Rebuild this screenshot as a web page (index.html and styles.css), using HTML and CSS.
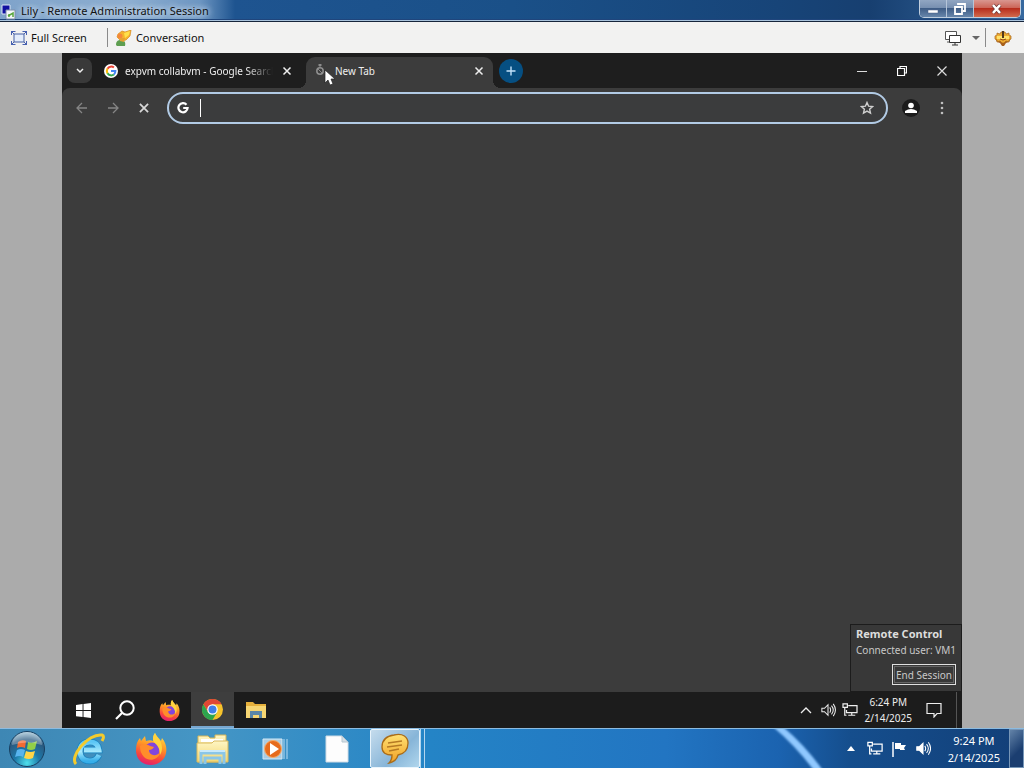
FILE: index.html
```html
<!DOCTYPE html>
<html lang="en">
<head>
<meta charset="utf-8">
<title>Lily - Remote Administration Session</title>
<link rel="stylesheet" href="styles.css">
</head>
<body>
<svg class="defs" aria-hidden="true">
  <defs>
    <linearGradient id="flame" x1="0.7" y1="0" x2="0.4" y2="1"><stop offset="0" stop-color="#ffe14a"/><stop offset=".4" stop-color="#ff9a26"/><stop offset=".75" stop-color="#f9473c"/><stop offset="1" stop-color="#e3206f"/></linearGradient>
    <radialGradient id="orb" cx=".5" cy=".9" r=".9"><stop offset="0" stop-color="#4fe0ec"/><stop offset=".4" stop-color="#1c78a8"/><stop offset=".75" stop-color="#2b5a80"/><stop offset="1" stop-color="#a8cbdc"/></radialGradient>
    <linearGradient id="ieblue" x1="0" y1="0" x2="0" y2="1"><stop offset="0" stop-color="#5bc6f5"/><stop offset=".5" stop-color="#a5e8fc"/><stop offset="1" stop-color="#35aeea"/></linearGradient>
    <linearGradient id="bubble" x1="0" y1="0" x2="0" y2="1"><stop offset="0" stop-color="#ffe173"/><stop offset="1" stop-color="#f0a024"/></linearGradient>
    <linearGradient id="folder" x1="0" y1="0" x2="0" y2="1"><stop offset="0" stop-color="#fff6c4"/><stop offset="1" stop-color="#f1d572"/></linearGradient>
    <symbol id="firefox" viewBox="0 0 32 32">
      <path fill="url(#flame)" d="M20 0c1 3 4 5 6 8l1-3c4 5 5 10 4 15-1 7-8 12-15 12C7 32 1 26 1 17c0-5 1-9 4-12l1 3 4-5 1 5c3-1 5-1 7 0 0-3 0-6 2-8z"/>
      <circle cx="17" cy="17" r="7.500" fill="#8245dd"/>
      <path fill="#ff8d2b" d="M5 13c3-2 7-2 10 0l4 1c-1 2-3 3-5 3 0 5 6 7 11 3-2 7-11 9-16 4-3-3-4-7-4-11z"/>
      <path fill="#ffd33f" d="M20 0c1 4 7 7 7 15 0 3-1 5-2 7 0-7-3-10-6-13-2-3-1-6 1-9z"/>
    </symbol>
    <symbol id="cross" viewBox="0 0 12 12"><path d="M2.500 2.500l7 7M9.500 2.500l-7 7" fill="none" stroke="currentColor" stroke-width="1.500"/></symbol>
    <symbol id="flag4" viewBox="0 0 16 16"><path fill="currentColor" d="M0 2l7-1v6.500H0zM8 1l8-1v7.500H8zM0 8.500h7V15l-7-1zM8 8.500h8V16l-8-1z"/></symbol>
    <symbol id="speaker" viewBox="0 0 18 16"><path d="M2 6h3l4-4v12l-4-4H2z" fill="var(--fill)" stroke="currentColor" stroke-width="1.200"/><path d="M11 5q2 3 0 6M13 3q4 5 0 10M15 1q5 7 0 14" fill="none" stroke="currentColor" stroke-width="1.200"/></symbol>
    <symbol id="network" viewBox="0 0 18 16"><path d="M7 3h10v8H5V8M11 11v3M7 14h8M1 1h5v4H1zM3 5v9h2" fill="none" stroke="currentColor" stroke-width="1.400"/></symbol>
  </defs>
</svg>

<header class="titlebar">
  <svg class="app-icon" width="16" height="18" viewBox="0 0 16 18"><path fill="#1010a0" stroke="#dce6f4" d="M2 3h8v9H2z"/><path fill="#f4f6fa" stroke="#7f8fa8" d="M6 8h9v9H6z"/><path d="M8 14l5-3v4M9 15v-3" stroke="#58a63c" stroke-width="1.500" fill="none"/></svg>
  <h1 class="title">Lily - Remote Administration Session</h1>
  <div class="aero-controls">
    <button class="aero-btn" aria-label="Minimize"><svg width="14" height="12" viewBox="0 0 14 12"><path fill="#fff" stroke="#4c6388" stroke-width=".500" d="M2 7h10v3H2z"/></svg></button>
    <button class="aero-btn" aria-label="Restore"><svg width="14" height="14" viewBox="0 0 14 14"><path d="M5 3V2h7v7h-2M2 5h7v7H2z" fill="none" stroke="#fff" stroke-width="1.800"/></svg></button>
    <button class="aero-btn aero-close" aria-label="Close"><svg width="14" height="12" viewBox="0 0 14 12"><path d="M3 2l7 8M10 2l-7 8" stroke="#713838" stroke-width="4"/><path d="M3 2l7 8M10 2l-7 8" stroke="#fff" stroke-width="2.500"/></svg></button>
  </div>
</header>

<nav class="toolbar" aria-label="Session">
  <button class="tool"><svg width="16" height="14" viewBox="0 0 16 14"><path d="M3 3h10v8H3z" fill="#e4edfb" stroke="#4660a4"/><path d="M.5 4V.5h4M11.500 .5h4V4M15.500 10v3.500h-4M4.500 13.500h-4V10M0 0l3 3M16 0l-3 3M16 14l-3-3M0 14l3-3" fill="none" stroke="#4660b0"/></svg>Full Screen</button>
  <span class="rule"></span>
  <button class="tool"><svg width="16" height="16" viewBox="0 0 16 16"><path fill="#f5b42c" stroke="#d78a20" stroke-width=".700" d="M6 1l3 1 6-2-1 6-4 4-5 1-4-4 1-3z"/><circle cx="4" cy="6" r="2.500" fill="#f4883c"/><path fill="#ffe04a" d="M8 3l6-2-1 4-4 3z"/><path fill="#5e9e50" d="M0 15c0-4 2-5 5-5 3 0 5 2 4 6H1z"/><path fill="#e6a032" d="M4 8h5l-1 4-4-1z"/></svg>Conversation</button>
  <span class="spacer"></span>
  <button class="tool" aria-label="Monitors"><svg width="18" height="16" viewBox="0 0 18 16"><path fill="#fff" stroke="#555" d="M1.500 1.500h11v8h-11zM3 12h4"/><path fill="#fff" stroke="#333" d="M5.500 5.500h11v7h-11zM8 15h6M11 13v2"/></svg></button>
  <button class="tool tool-arrow" aria-label="Monitor options"><svg width="8" height="4" viewBox="0 0 8 4"><path fill="#666" d="M0 0h8L4 4z"/></svg></button>
  <span class="rule"></span>
  <button class="tool tool-gear" aria-label="Settings"><svg width="18" height="16" viewBox="0 0 18 16"><path fill="#a8601c" d="M1 8l2 4 3 1 2 3h2l2-3 3-1 2-4z"/><path fill="#edac32" stroke="#a8661c" stroke-width=".700" d="M1 6l2-1V3l3 1 1-2h4l1 2 3-1v2l2 1v3l-2 1v2l-3-1-2 2H8l-2-2-3 1v-2L1 9z"/><path fill="#ffe26c" d="M3 6h12v3H3z"/><path d="M9 1v7" stroke="#52381e" stroke-width="2"/><path d="M6 9q3 2 6 0" stroke="#8d481c" fill="none"/></svg></button>
</nav>

<main class="session">
  <section class="remote">
    <div class="tabstrip">
      <button class="tab-search" aria-label="Search tabs"><svg width="10" height="8" viewBox="0 0 10 8"><path d="M2 2l3 3 3-3" fill="none" stroke="#eee" stroke-width="1.500"/></svg></button>
      <div class="tab">
        <svg width="14" height="14" viewBox="0 0 24 24"><circle cx="12" cy="12" r="12" fill="#fff"/><g fill="none" stroke-width="3.500"><path d="M6 8a7.500 7.500 0 0 1 11-2" stroke="#ea4335"/><path d="M6 16a7.500 7.500 0 0 1 0-8" stroke="#fbbc05"/><path d="M17 18a7.500 7.500 0 0 1-11-2" stroke="#34a853"/><path d="M12 12h7.500q0 4-2.500 6" stroke="#4285f4"/></g></svg>
        <a class="tab-label fade" href="#search">expvm collabvm - Google Search</a>
        <button class="tab-close" aria-label="Close tab"><svg width="12" height="12"><use href="#cross"/></svg></button>
      </div>
      <div class="tab tab-active">
        <svg width="14" height="14" viewBox="0 0 14 14"><circle cx="6" cy="7" r="3.200" fill="none" stroke="#909090" stroke-width="1.500"/><path d="M5 0h2v2H5zM4 5l4 4" fill="#999" stroke="#888"/></svg>
        <a class="tab-label" href="#new">New Tab</a>
        <button class="tab-close" aria-label="Close tab"><svg width="12" height="12"><use href="#cross"/></svg></button>
        <svg class="pointer" width="12" height="18" viewBox="0 0 12 18"><path fill="#fff" stroke="#222" stroke-width=".700" d="M1 1v13l3-3 2 5 3-1-2-5h4z"/></svg>
      </div>
      <button class="new-tab" aria-label="New tab"><svg width="12" height="12" viewBox="0 0 12 12"><path d="M6 1.500v9M1.500 6h9" stroke="#c2e2fa" stroke-width="1.400"/></svg></button>
      <span class="spacer"></span>
      <button class="win-btn" aria-label="Minimize"><svg width="10" height="10" viewBox="0 0 10 10"><path d="M0 5.500h10" stroke="#ddd"/></svg></button>
      <button class="win-btn" aria-label="Restore"><svg width="10" height="10" viewBox="0 0 10 10"><path d="M3 2.500v-2h6.500v6.500h-2M.5 2.500h7v7h-7z" fill="none" stroke="#fff" stroke-width="1.200"/></svg></button>
      <button class="win-btn" aria-label="Close"><svg width="10" height="10" viewBox="0 0 10 10"><path d="M.5 .5l9 9M9.500 .5l-9 9" stroke="#ddd" stroke-width="1.200"/></svg></button>
    </div>

    <div class="browser-bar">
      <button class="nav-btn dim" aria-label="Back"><svg width="12" height="12" viewBox="0 0 12 12"><path d="M11 6H1M6 1L1 6l5 5" fill="none" stroke="currentColor" stroke-width="1.300"/></svg></button>
      <button class="nav-btn dim" aria-label="Forward"><svg width="12" height="12" viewBox="0 0 12 12"><path d="M1 6h10M6 1l5 5-5 5" fill="none" stroke="currentColor" stroke-width="1.300"/></svg></button>
      <button class="nav-btn" aria-label="Stop"><svg width="14" height="14"><use href="#cross"/></svg></button>
      <div class="omnibox">
        <svg width="12" height="12" viewBox="0 0 12 12"><path d="M9.500 2.700A4.600 4.600 0 1 0 10.600 6H6.200" fill="none" stroke="#fff" stroke-width="2.200"/></svg>
        <span class="caret"></span>
        <input class="address" type="text" aria-label="Address">
        <button class="star" aria-label="Bookmark"><svg width="14" height="14" viewBox="0 0 14 14"><path d="M7 1.500l1.600 3.700 3.900.4-2.900 2.600.9 3.900L7 10.100l-3.500 2 .9-3.900-2.900-2.600 3.900-.4z" fill="none" stroke="#d0d0d0" stroke-width="1.400"/></svg></button>
      </div>
      <button class="profile" aria-label="Profile"><svg width="12" height="12" viewBox="0 0 12 12"><circle cx="6" cy="3.500" r="2.800" fill="#fff"/><path fill="#fff" d="M0 11V9q6-4 12 0v2z"/></svg></button>
      <button class="menu" aria-label="Menu"><svg width="4" height="14" viewBox="0 0 4 14"><g fill="#c0c0c0"><circle cx="2" cy="2" r="1.300"/><circle cx="2" cy="7" r="1.300"/><circle cx="2" cy="12" r="1.300"/></g></svg></button>
    </div>

    <div class="page">
      <aside class="control">
        <h2>Remote Control</h2>
        <p>Connected user: VM1</p>
        <button class="end">End Session</button>
      </aside>
    </div>

    <footer class="remote-taskbar">
      <button class="rt-app" aria-label="Start"><svg width="15" height="15"><use href="#flag4"/></svg></button>
      <button class="rt-app rt-search" aria-label="Search"><svg width="20" height="20" viewBox="0 0 20 20"><circle cx="12" cy="8" r="6.700" fill="none" stroke="#fff" stroke-width="2"/><path d="M7 13l-6 6" stroke="#fff" stroke-width="2.200"/></svg></button>
      <button class="rt-app" aria-label="Firefox"><svg width="21" height="21"><use href="#firefox"/></svg></button>
      <button class="rt-app rt-active" aria-label="Chrome"><svg width="21" height="21" viewBox="0 0 24 24"><circle cx="12" cy="12" r="12" fill="#f6c32c"/><path fill="#df4735" d="M1.600 6A12 12 0 0 1 22.400 6H12L7 15z"/><path fill="#2da44e" d="M1.600 6A12 12 0 0 0 12 24l5.200-9-5.200 1-5-1z"/><circle cx="12" cy="12" r="6" fill="#fff"/><circle cx="12" cy="12" r="4.600" fill="#3e7ee8"/></svg></button>
      <button class="rt-app" aria-label="File Explorer"><svg width="20" height="16" viewBox="0 0 20 16"><path fill="#e6b03c" d="M0 0h7l2 2h11v4H0z"/><path fill="#f7d673" d="M0 4h20v12H0z"/><path fill="#5a86a8" d="M4 9h12v7h-3v-3H7v3H4z"/></svg></button>
      <span class="spacer"></span>
      <button class="rt-tray" aria-label="Show hidden icons"><svg width="12" height="8" viewBox="0 0 12 8"><path d="M1 7l5-5 5 5" fill="none" stroke="#eee" stroke-width="1.300"/></svg></button>
      <button class="rt-tray" aria-label="Volume"><svg width="16" height="14"><use href="#speaker"/></svg></button>
      <button class="rt-tray" aria-label="Network"><svg width="16" height="14"><use href="#network"/></svg></button>
      <time class="rt-clock"><span>6:24 PM</span><span>2/14/2025</span></time>
      <button class="rt-note" aria-label="Notifications"><svg width="16" height="16" viewBox="0 0 16 16"><path d="M1 1.500h14v10h-4L8 15v-3.500H1z" fill="none" stroke="#eee" stroke-width="1.200"/></svg></button>
    </footer>
  </section>
</main>

<footer class="taskbar">
  <svg class="streak" width="70" height="40" viewBox="0 0 70 40"><defs><filter id="soft"><feGaussianBlur stdDeviation="1.300"/></filter></defs><path d="M2-3h10q24 20 42 46h-9Q26 17 2-3z" fill="#8fc8ff" filter="url(#soft)"/></svg>
  <button class="start" aria-label="Start"><svg width="38" height="38" viewBox="0 0 38 38"><circle cx="19" cy="19" r="17.500" fill="url(#orb)" stroke="#173f61"/><path fill="#f26a32" d="M10 12q4-3 8-1l-1 7q-4-2-8 0z"/><path fill="#91cf48" d="M20 12q4 2 9-1l-2 8q-4 2-8 0z"/><path fill="#58b4ee" d="M9 20q4-2 8 0l-2 7q-3-2-8 0z"/><path fill="#ffd547" d="M18 21q4 2 9 0l-2 7q-4 2-9 0z"/><path fill="#fff" opacity=".28" d="M4 15a15 13 0 0 1 30 0q-15-5-30 0z"/></svg></button>
  <button class="app" aria-label="Internet Explorer"><svg width="34" height="34" viewBox="0 0 34 34"><path d="M27 23q-3 6-9 6-9 0-10-9 0-10 10-10 8 0 9 8H12" fill="none" stroke="#1783c0" stroke-width="6.500"/><path d="M27 23q-3 6-9 6-9 0-10-9 0-10 10-10 8 0 9 8H12" fill="none" stroke="url(#ieblue)" stroke-width="5"/><path d="M4 32C-3 25 16 1 30 3q3 1 0 6" fill="none" stroke="#f4cb2c" stroke-width="3"/></svg></button>
  <button class="app" aria-label="Firefox"><svg width="32" height="32"><use href="#firefox"/></svg></button>
  <button class="app" aria-label="Explorer"><svg width="34" height="32" viewBox="0 0 34 32"><path fill="url(#folder)" stroke="#d6b456" d="M2 3h10l2 2h5V2h11v27H2z"/><path fill="#fff" d="M5 6h22v3H5z"/><path fill="url(#folder)" stroke="#d9b95f" d="M1 10h15l2-2h14v21H1z"/><path d="M5 31V20h23v11M9 31v-6h15v6" stroke="#8ac6e8" stroke-width="3" fill="none"/><path d="M4 18h25" stroke="#c9e9fa" stroke-width="2"/></svg></button>
  <button class="app" aria-label="Media Player"><svg width="26" height="26" viewBox="0 0 26 26"><path fill="#a9cce3" stroke="#d4e9f5" d="M1 3h19v20H1z"/><path d="M22 3v20M25 3v20" stroke="#b8dcf5"/><circle cx="11" cy="13" r="8.500" fill="#e66b1c" stroke="#f7ac68"/><path fill="#fff" d="M8 7l9 6-9 6z"/></svg></button>
  <button class="app" aria-label="Document"><svg width="24" height="28" viewBox="0 0 24 28"><path fill="#fdfdfd" stroke="#d1dce5" d="M1 1h16l6 6v20H1z"/><path fill="#d7e0e6" stroke="#b6c6d0" d="M17 1v6h6z"/></svg></button>
  <button class="app app-active" aria-label="Conversation"><svg width="32" height="32" viewBox="0 0 32 32"><path fill="url(#bubble)" stroke="#a96c19" stroke-width="1.300" d="M15 2c9-2 14 2 14 8 0 8-5 11-10 12-1 4-4 7-9 8 3-3 3-5 3-8-6 0-10-2-10-8C3 7 8 3 15 2z"/><path d="M9 10l14-2M8 14l15-2M10 18l10-2" stroke="#b67a24" stroke-width="1.300"/></svg></button>
  <span class="stack"></span>
  <span class="spacer"></span>
  <button class="tray" aria-label="Show hidden icons"><svg width="8" height="5" viewBox="0 0 8 5"><path fill="#fff" d="M0 5l4-5 4 5z"/></svg></button>
  <button class="tray" aria-label="Network"><svg width="16" height="15"><use href="#network"/></svg></button>
  <button class="tray" aria-label="Action Center"><svg width="16" height="16" viewBox="0 0 16 16"><path d="M2 1v15" stroke="#fff" stroke-width="1.500"/><path fill="#fff" d="M4 2h6v2h5l-2 3 1 2H9V8H4z"/></svg></button>
  <button class="tray tray-solid" aria-label="Volume"><svg width="16" height="15"><use href="#speaker"/></svg></button>
  <time class="clock"><span>9:24 PM</span><span>2/14/2025</span></time>
  <button class="show-desktop" aria-label="Show desktop"></button>
</footer>
</body>
</html>
```

FILE: styles.css
```css
* { box-sizing: border-box; }

body {
  margin: 0;
  height: 100vh;
  display: flex;
  flex-direction: column;
  overflow: hidden;
  font: 11px/16px "Noto Sans", sans-serif;
  color: #111;
}

.defs { position: absolute; width: 0; height: 0; }

button {
  margin: 0;
  padding: 0;
  border: 0;
  background: none;
  color: inherit;
  font: inherit;
  display: flex;
  align-items: center;
  justify-content: center;
  flex: none;
}

svg { flex: none; }
a { color: inherit; text-decoration: none; }
h1, h2, p { margin: 0; font: inherit; }
.spacer { flex: 1; }

/* Local window frame */
.titlebar {
  flex: none;
  height: 22px;
  display: flex;
  align-items: center;
  gap: 5px;
  background: linear-gradient(90deg, #7fa3ca 0, #8daed0 130px, #6d96c2 200px, #1e5490 235px, #1a5088 50%, #174478 76%, #173f70 85%, #37699f 100%);
  border-bottom: 1px solid #17263c;
  box-shadow: inset 0 -1px #a9c3dc, inset 0 -2px #1f457c;
}

.title { text-shadow: 0 0 6px #dce8f5, 0 0 6px #dce8f5; }

.aero-controls {
  display: flex;
  align-self: flex-start;
  height: 18px;
  margin-left: auto;
  margin-right: 3px;
  border: 1px solid #c0cede;
  border-top: 0;
  border-radius: 0 0 5px 5px;
  overflow: hidden;
}

.aero-btn {
  width: 27px;
  background: linear-gradient(#91a6c2 0, #7890b1 45%, #3f5d86 50%, #6786ab 100%);
  border-right: 1px solid #b5c5d9;
}

.aero-close {
  width: 46px;
  border-right: 0;
  background: linear-gradient(#d99790 0, #cc6659 45%, #b72d1d 50%, #d16a4c 100%);
}

.toolbar {
  flex: none;
  height: 31px;
  display: flex;
  align-items: center;
  padding: 0 10px 0 11px;
  background: #f2f2f1;
}

.tool { gap: 4px; }
.tool-arrow { margin-left: 10px; }
.tool-gear { margin-right: 2px; }
.rule { width: 1px; height: 19px; margin: 0 8px 0 20px; background: #8a8a8a; }
.tool-arrow + .rule { margin: 0 8px 0 5px; }

/* Remote screen */
.session { flex: 1; min-height: 0; display: flex; padding: 0 62px; background: #ababab; }
.remote { flex: 1; min-width: 0; display: flex; flex-direction: column; background: #1e1e1e; color: #eee; font-size: 10px; }

.tabstrip { flex: none; height: 35px; display: flex; align-items: center; padding: 0 0 0 5px; }

.tab-search { width: 25px; height: 25px; border-radius: 8px; background: #393939; }

.tab { width: 207px; height: 31px; display: flex; align-items: center; gap: 7px; padding: 0 5px 0 12px; }
.tab-label { flex: 1; min-width: 0; white-space: nowrap; overflow: hidden; }
.fade { -webkit-mask-image: linear-gradient(90deg, #000 82%, transparent); mask-image: linear-gradient(90deg, #000 82%, transparent); }
.tab-close { width: 14px; height: 14px; }

.tab-active {
  position: relative;
  align-self: flex-end;
  width: 187px;
  margin-left: 7px;
  padding: 0 7px 4px 8px;
  background: #3c3c3c;
  border-radius: 9px 9px 0 0;
}

.tab-active::before,
.tab-active::after {
  content: "";
  position: absolute;
  bottom: 0;
  width: 8px;
  height: 8px;
}
.tab-active::before { right: 100%; background: radial-gradient(circle at 0 0, transparent 8px, #3c3c3c 8px); }
.tab-active::after { left: 100%; background: radial-gradient(circle at 100% 0, transparent 8px, #3c3c3c 8px); }

.pointer { position: absolute; left: 18px; top: 12px; }

.new-tab { width: 24px; height: 24px; margin-left: 6px; border-radius: 50%; background: #064f82; }
.win-btn { width: 40px; height: 30px; }

.browser-bar {
  flex: none;
  height: 40px;
  display: flex;
  align-items: center;
  padding: 0 12px 0 4px;
  background: #3c3c3c;
  border-radius: 8px 8px 0 0;
}

.nav-btn { width: 31px; height: 28px; color: #d8d8d8; }
.dim { color: #858585; }

.omnibox {
  flex: 1;
  min-width: 0;
  height: 32px;
  margin-left: 8px;
  display: flex;
  align-items: center;
  padding: 0 12px 0 8px;
  border: 2px solid #b2cbe5;
  border-radius: 16px;
  background: #3b3c3d;
}

.caret { width: 1px; height: 18px; margin-left: 11px; background: #fff; }
.address { flex: 1; min-width: 0; height: 24px; border: 0; padding: 0; outline: 0; background: none; color: #eee; font: inherit; }
.profile { width: 18px; height: 18px; margin: 0 20px 0 14px; border-radius: 50%; background: #1b1b1b; }
.menu { width: 4px; margin-right: 6px; }

.page { flex: 1; min-height: 0; display: flex; align-items: flex-end; justify-content: flex-end; background: #3c3c3c; }

.control {
  display: flex;
  flex-direction: column;
  padding: 1px 5px 6px;
  border: 1px solid #1c1c1c;
  background: #383838;
  color: #c8c8c8;
}

.control h2 { font-size: 11px; font-weight: 700; line-height: 16px; color: #ddd; }
.control p { line-height: 17px; }
.end { align-self: flex-end; height: 21px; margin-top: 5px; padding: 0 3px; border: 1px solid #e0e0e0; outline: 1px solid #666; outline-offset: -3px; }

.remote-taskbar { flex: none; height: 36px; display: flex; align-items: center; background: #1c1c1c; }
.rt-app { width: 43px; height: 36px; color: #fff; }
.rt-search { padding-right: 3px; }
.rt-active { background: #3e3e3e; border-bottom: 2px solid #77a8d2; }
.rt-tray { --fill: none; width: 22px; height: 36px; }
.rt-clock { display: flex; flex-direction: column; align-items: center; margin-left: 4px; }
.rt-note { width: 44px; height: 36px; }
.rt-note::before { content: none; }
.remote-taskbar::after { content: ""; width: 5px; height: 36px; border-left: 1px solid #555; }

/* Local taskbar */
.taskbar {
  position: relative;
  flex: none;
  height: 40px;
  display: flex;
  align-items: center;
  color: #fff;
  border-top: 1px solid #8cbbe0;
  background: linear-gradient(90deg, #3e87b4 0, #4596c5 20%, #2484c6 42%, #2275c2 65%, #1b63b0 76%, #154e8d 83%, #123f78 100%);
}

.streak { position: absolute; right: 184px; top: 0; }
.start { width: 53px; height: 39px; margin-right: 5px; }
.app { width: 62px; height: 39px; }

.app-active {
  width: 50px;
  margin-left: 2px;
  border: 1px solid #e8f4fc;
  border-radius: 2px;
  background: linear-gradient(135deg, #c5dced, #87b5d8 60%, #b0d6ed);
}

.stack { width: 5px; height: 39px; border: solid #b4d6ef; border-width: 0 1px; }

.tray { --fill: none; width: 24px; height: 39px; }
.tray-solid { --fill: #fff; }
.clock { display: flex; flex-direction: column; align-items: center; margin: 0 9px 0 13px; line-height: 17px; }
.show-desktop { width: 15px; height: 39px; border: 1px solid #7797b8; background: linear-gradient(135deg, #6383a8, #1b3e70 60%); }
```
